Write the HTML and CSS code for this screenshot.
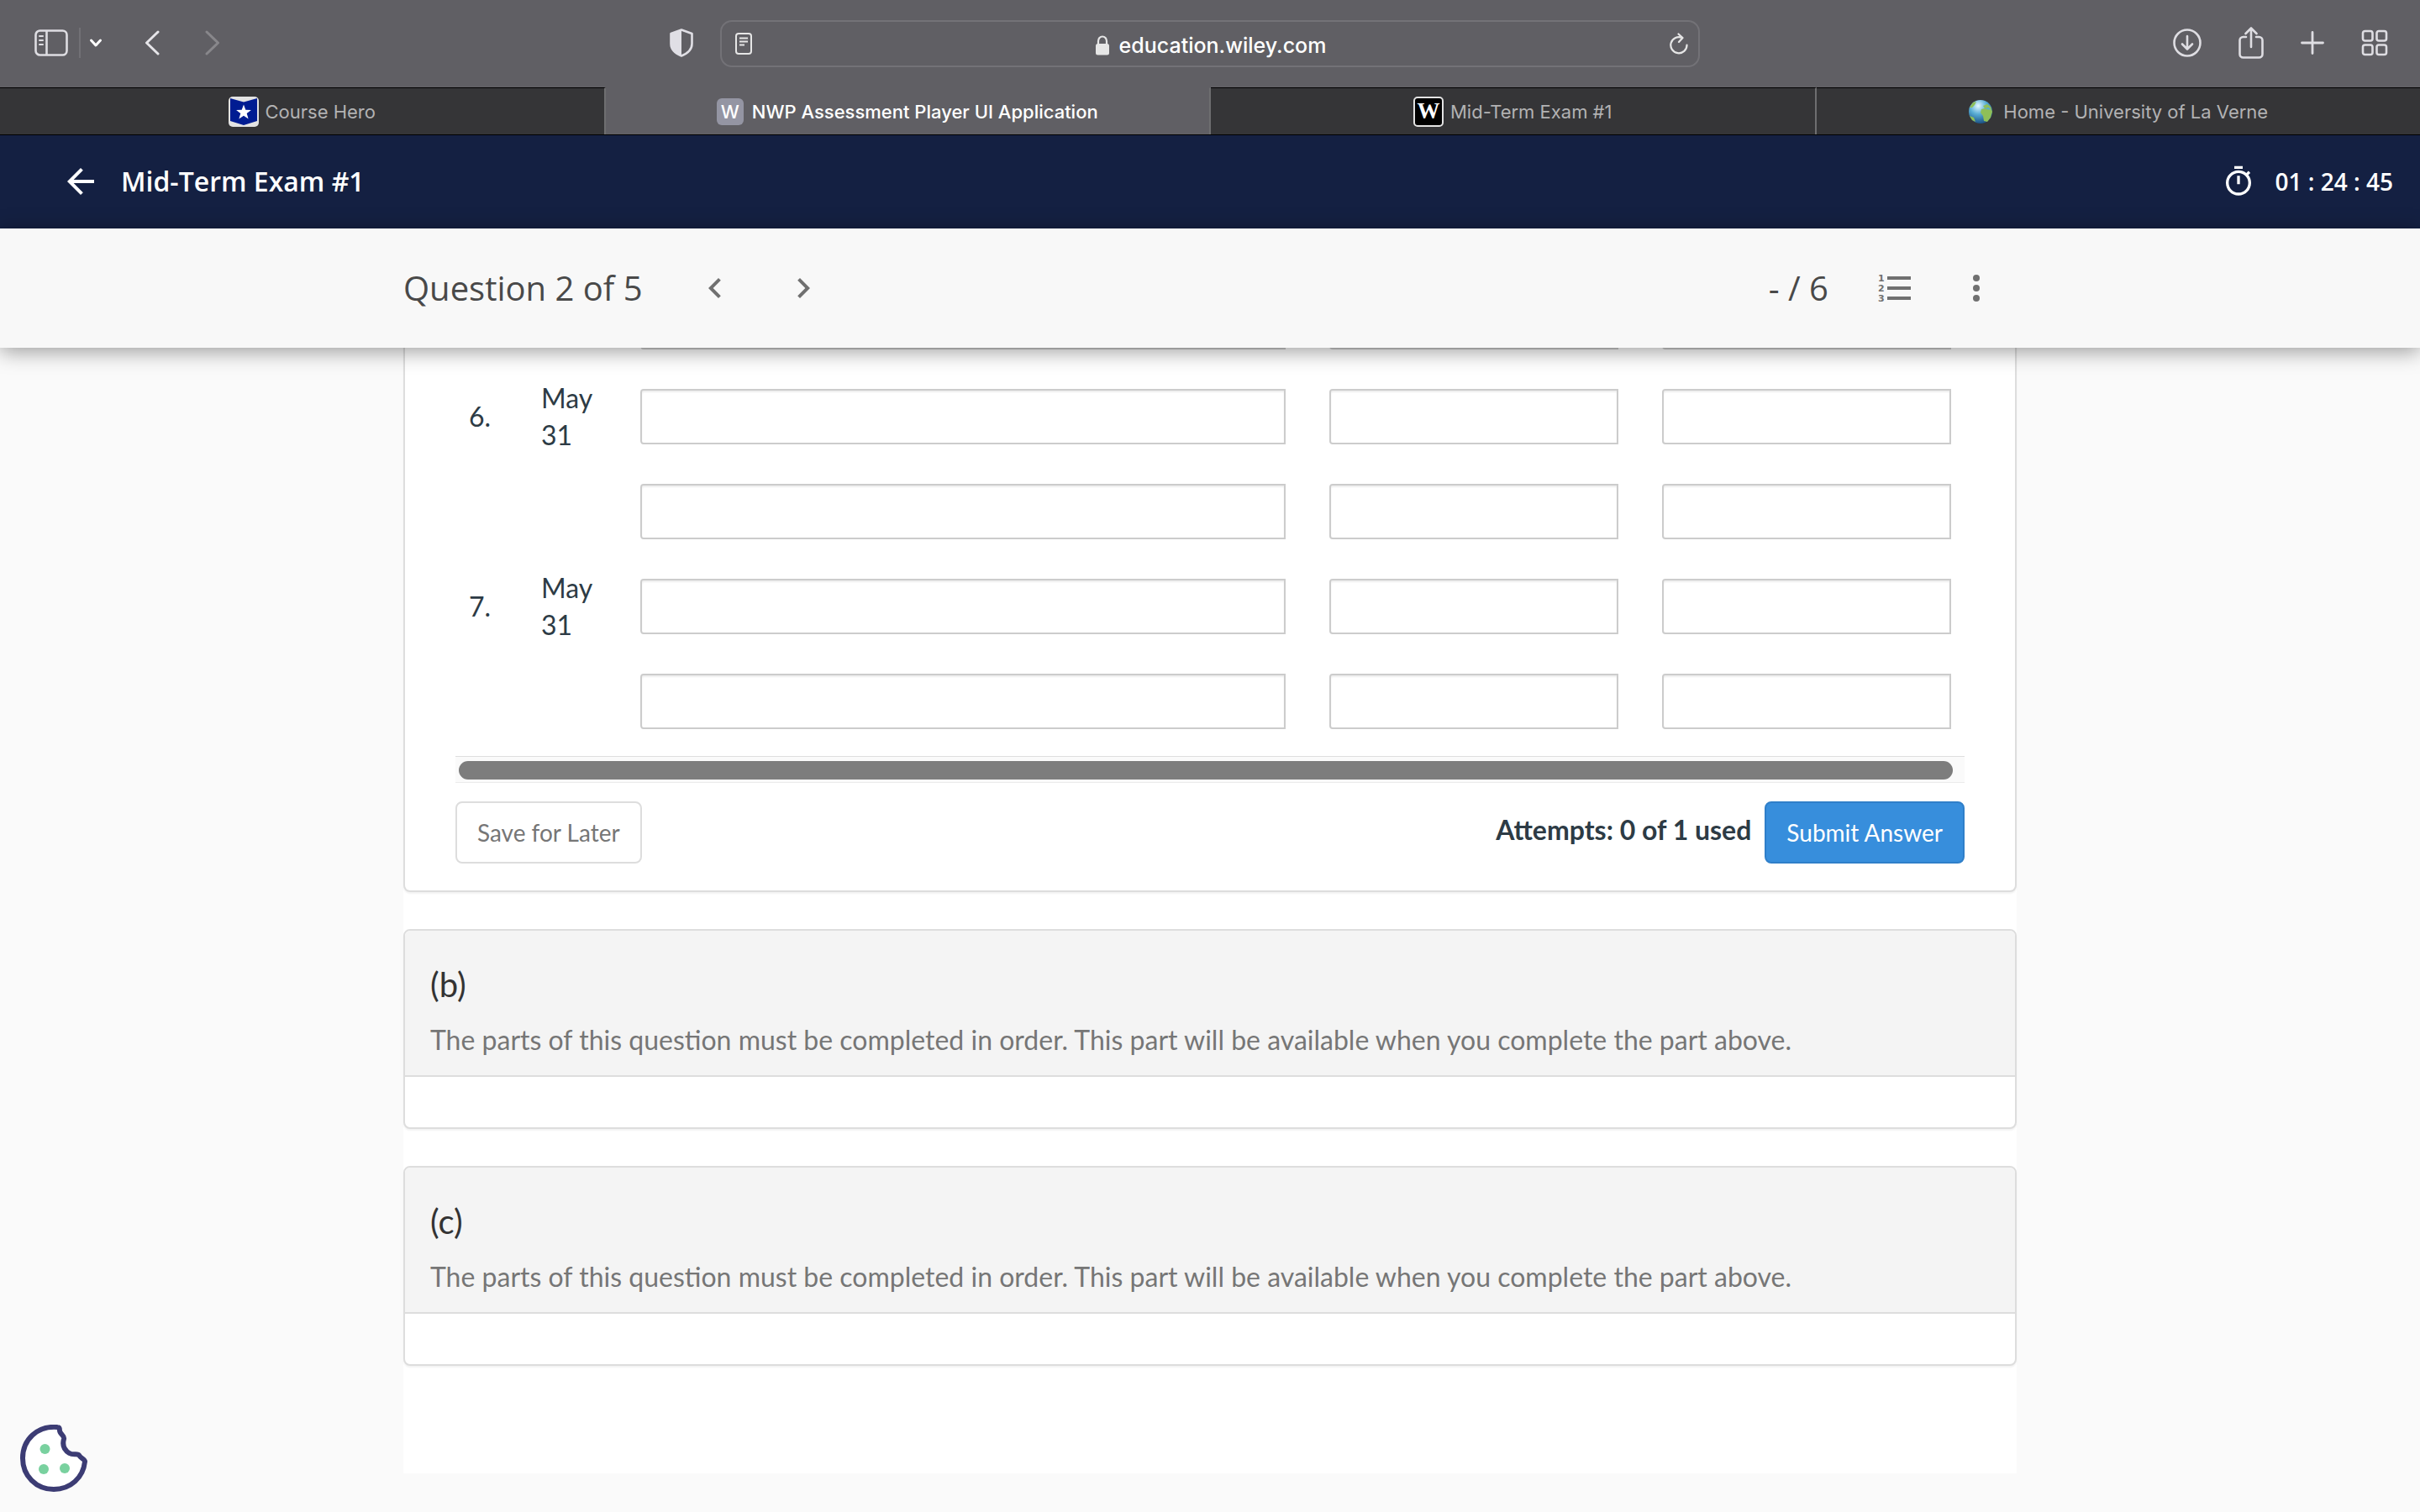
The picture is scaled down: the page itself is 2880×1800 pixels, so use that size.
FILE: index.html
```html
<!DOCTYPE html>
<html lang="en">
<head>
  <meta charset="UTF-8" />
  <meta name="viewport" content="width=device-width, initial-scale=1.0"/>
  <title>NWP Assessment Player UI Application</title>
  <link rel="stylesheet" href="styles.css">
</head>
<body>
  <!-- Browser toolbar -->
  <div class="toolbar">
    <div class="toolbar-left">
      <button class="tool" aria-label="Show sidebar">
        <svg width="40" height="32" viewBox="0 0 40 32" fill="none" stroke="#dedde2" stroke-width="2.6"><rect x="1.5" y="1.5" width="37" height="29" rx="5"/><path d="M14.5 2v28"/><path d="M6 8h4M6 13h4M6 18h4" stroke-width="2" stroke-linecap="round"/></svg>
      </button>
      <span class="divider"></span>
      <button class="tool tool-menu" aria-label="Tab groups">
        <svg width="16" height="12" viewBox="0 0 16 12" fill="none" stroke="#fff" stroke-width="3" stroke-linecap="round" stroke-linejoin="round"><path d="M2.5 3L8 9l5.500-6"/></svg>
      </button>
      <button class="tool tool-back" aria-label="Back">
        <svg width="18" height="30" viewBox="0 0 18 30" fill="none" stroke="#e6e5e9" stroke-width="3" stroke-linecap="round" stroke-linejoin="round"><path d="M16 2L2.500 15 16 28"/></svg>
      </button>
      <button class="tool tool-forward" aria-label="Forward">
        <svg width="18" height="30" viewBox="0 0 18 30" fill="none" stroke="#88878b" stroke-width="3" stroke-linecap="round" stroke-linejoin="round"><path d="M2 2l13.500 13L2 28"/></svg>
      </button>
      <button class="tool tool-shield" aria-label="Privacy report">
        <svg width="28" height="34" viewBox="0 0 28 34"><path d="M14 1.500L26.500 6v12c0 7-5 11.500-12.500 14.500C6.500 29.500 1.500 25 1.500 18V6z" fill="none" stroke="#e0dfe5" stroke-width="2.600" stroke-linejoin="round"/><path d="M14 1L1 6v12c0 7 5 12 13 15z" fill="#e0dfe5"/></svg>
      </button>
    </div>

    <div class="address">
      <button class="tool" aria-label="Reader">
        <svg width="20" height="26" viewBox="0 0 20 26" fill="none" stroke="#e6e6e6" stroke-width="2"><rect x="1" y="1" width="18" height="24" rx="3"/><path d="M5 6.500h10M5 10.500h10M5 14.500h6"/></svg>
      </button>
      <span class="url">
        <svg width="16" height="24" viewBox="0 0 16 24"><path d="M3 12V7a5 5.500 0 0 1 10 0v5" fill="none" stroke="#e6e6e6" stroke-width="2.200"/><rect x="0" y="10" width="16" height="13.500" rx="2.500" fill="#e6e6e6"/></svg>
        education.wiley.com
      </span>
      <button class="tool" aria-label="Reload">
        <svg width="22" height="26" viewBox="0 0 22 26" fill="none" stroke="#e6e6e6" stroke-width="2.200" stroke-linecap="round" stroke-linejoin="round"><path d="M20.500 14.500A9.600 9.600 0 1 1 15 6"/><path d="M10.500 1.500L15.500 6l-4.500 5"/></svg>
      </button>
    </div>

    <div class="toolbar-right">
      <button class="tool" aria-label="Downloads">
        <svg width="34" height="34" viewBox="0 0 34 34" fill="none" stroke="#dedde2" stroke-width="2.600" stroke-linecap="round" stroke-linejoin="round"><circle cx="17" cy="17" r="15.500"/><path d="M17 9v15M11 18.500l6 6 6-6"/></svg>
      </button>
      <button class="tool" aria-label="Share">
        <svg width="30" height="38" viewBox="0 0 30 38" fill="none" stroke="#dedde2" stroke-width="2.600" stroke-linecap="round" stroke-linejoin="round"><path d="M9 12H5.500a4 4 0 0 0-4 4v16.500a4 4 0 0 0 4 4h19a4 4 0 0 0 4-4V16a4 4 0 0 0-4-4H21M15 2v22M8.500 8L15 1.500 21.500 8"/></svg>
      </button>
      <button class="tool" aria-label="New tab">
        <svg width="28" height="28" viewBox="0 0 28 28" fill="none" stroke="#dedde2" stroke-width="2.800" stroke-linecap="round"><path d="M14 1.500v25M1.500 14h25"/></svg>
      </button>
      <button class="tool" aria-label="Tab overview">
        <svg width="32" height="32" viewBox="0 0 32 32" fill="none" stroke="#dedde2" stroke-width="2.600"><rect x="2" y="2" width="11.500" height="11.500" rx="2.500"/><rect x="18.500" y="2" width="11.500" height="11.500" rx="2.500"/><rect x="2" y="18.500" width="11.500" height="11.500" rx="2.500"/><rect x="18.500" y="18.500" width="11.500" height="11.500" rx="2.500"/></svg>
      </button>
    </div>
  </div>

  <!-- Browser tabs -->
  <nav class="tabs">
    <a class="tab" href="#">
      <svg width="36" height="36" viewBox="0 0 36 36"><rect width="36" height="36" rx="5" fill="#e3e3e3"/><path d="M2 2l16 4.500L34 2v27l-16 5L2 29z" fill="#001c92"/><path d="M18 9.500l2.300 6.200 6.600.2-5.200 4.100 1.900 6.400-5.600-3.700-5.600 3.700 1.900-6.400-5.200-4.100 6.600-.2z" fill="#fff"/></svg>
      Course Hero
    </a>
    <a class="tab active" href="#">
      <span class="favicon favicon-gray">W</span>
      NWP Assessment Player UI Application
    </a>
    <a class="tab" href="#">
      <span class="favicon favicon-black">W</span>
      Mid-Term Exam #1
    </a>
    <a class="tab tab-globe" href="#">
      <svg width="30" height="30" viewBox="0 0 30 30"><defs><radialGradient id="sea" cx=".4" cy=".25" r=".8"><stop offset="0" stop-color="#e4f8ff"/><stop offset=".45" stop-color="#58acd4"/><stop offset="1" stop-color="#14487c"/></radialGradient></defs><circle cx="15" cy="15" r="14" fill="url(#sea)"/><path d="M18 8l5-2 4 3 2 6-2 7-4 5-4-1-1-6-3-4 1-4 4-1zM2 10l4-6 4-1-2 4-3 3zM2 20l5 2 2 5-4-2z" fill="#8fbf58"/><path d="M19 11l6-1 2 3-4-1z" fill="#58acd4"/></svg>
      Home - University of La Verne
    </a>
  </nav>

  <header class="exam-header">
    <a class="exam-title" href="#">
      <svg width="48" height="48" viewBox="0 0 24 24" fill="#fff"><path d="M20 11H7.830l5.590-5.590L12 4l-8 8 8 8 1.410-1.410L7.830 13H20v-2z"/></svg>
      Mid-Term Exam #1
    </a>
    <div class="timer">
      <svg width="40" height="40" viewBox="0 0 24 24" fill="#fff"><path d="M15 1H9v2h6V1zm-4 13h2V8h-2v6zm8.030-6.610l1.420-1.420c-.43-.51-.9-.99-1.410-1.410l-1.420 1.420A8.962 8.962 0 0 0 12 4c-4.970 0-9 4.030-9 9s4.020 9 9 9 9-4.030 9-9c0-2.120-.74-4.070-1.970-5.610zM12 20c-3.870 0-7-3.130-7-7s3.130-7 7-7 7 3.130 7 7-3.130 7-7 7z"/></svg>
      <span>01 : 24 : 45</span>
    </div>
  </header>

  <div class="question-bar">
    <div class="question-inner">
      <h1>Question 2 of 5</h1>
      <div class="pager">
        <button class="tool" aria-label="Previous question">
          <svg width="48" height="48" viewBox="0 0 24 24" fill="#707070"><path d="M15.410 7.410L14 6l-6 6 6 6 1.410-1.410L10.830 12z"/></svg>
        </button>
        <button class="tool" aria-label="Next question">
          <svg width="48" height="48" viewBox="0 0 24 24" fill="#707070"><path d="M10 6L8.590 7.410 13.170 12l-4.580 4.590L10 18l6-6z"/></svg>
        </button>
      </div>
      <span class="score">- / 6</span>
      <button class="tool" aria-label="Question list">
        <svg class="list-icon" width="48" height="48" viewBox="0 0 48 48" fill="#707070"><path d="M14 10h28v4H14zM14 22h28v4H14zM14 34h28v4H14z"/><text x="3" y="16">1</text><text x="3" y="28">2</text><text x="3" y="40">3</text></svg>
      </button>
      <button class="tool tool-more" aria-label="More options">
        <svg width="48" height="48" viewBox="0 0 24 24" fill="#707070"><circle cx="12" cy="6" r="2"/><circle cx="12" cy="12" r="2"/><circle cx="12" cy="18" r="2"/></svg>
      </button>
    </div>
  </div>

  <main class="content">
    <section class="card journal">
      <div class="table-scroll">
        <table>
          <colgroup>
            <col class="col-number">
            <col class="col-date">
            <col>
            <col class="col-amount">
            <col class="col-amount">
          </colgroup>
          <tr>
            <td></td>
            <td></td>
            <td class="entry"><input type="text" aria-label="Account title, line 1"></td>
            <td class="entry"><input type="text" aria-label="Debit, line 1"></td>
            <td class="entry"><input type="text" aria-label="Credit, line 1"></td>
          </tr>
          <tr>
            <td>6.</td>
            <td>May 31</td>
            <td class="entry"><input type="text" aria-label="Account title, line 2"></td>
            <td class="entry"><input type="text" aria-label="Debit, line 2"></td>
            <td class="entry"><input type="text" aria-label="Credit, line 2"></td>
          </tr>
          <tr>
            <td></td>
            <td></td>
            <td class="entry"><input type="text" aria-label="Account title, line 3"></td>
            <td class="entry"><input type="text" aria-label="Debit, line 3"></td>
            <td class="entry"><input type="text" aria-label="Credit, line 3"></td>
          </tr>
          <tr>
            <td>7.</td>
            <td>May 31</td>
            <td class="entry"><input type="text" aria-label="Account title, line 4"></td>
            <td class="entry"><input type="text" aria-label="Debit, line 4"></td>
            <td class="entry"><input type="text" aria-label="Credit, line 4"></td>
          </tr>
          <tr>
            <td></td>
            <td></td>
            <td class="entry"><input type="text" aria-label="Account title, line 5"></td>
            <td class="entry"><input type="text" aria-label="Debit, line 5"></td>
            <td class="entry"><input type="text" aria-label="Credit, line 5"></td>
          </tr>
        </table>
      </div>
      <div class="scroll-track"><div class="scroll-thumb"></div></div>
      <div class="actions">
        <button class="btn">Save for Later</button>
        <span class="attempts">Attempts: 0 of 1 used</span>
        <button class="btn btn-primary">Submit Answer</button>
      </div>
    </section>

    <section class="card">
      <div class="card-head">
        <h2>(b)</h2>
        <p>The parts of this question must be completed in order. This part will be available when you complete the part above.</p>
      </div>
      <div class="card-body"></div>
    </section>

    <section class="card">
      <div class="card-head">
        <h2>(c)</h2>
        <p>The parts of this question must be completed in order. This part will be available when you complete the part above.</p>
      </div>
      <div class="card-body"></div>
    </section>
  </main>

  <button class="tool cookie" aria-label="Cookie preferences">
    <svg width="80" height="80" viewBox="0 0 80 80"><path d="M44.500 3C20 1 3 18 3 40c0 21 16 37 37 37 20 0 35-14 37-33 .3-3-5-4-6.500-7-2-3.500-7 0-12-3C52 30 50 24 52 17c1-4-5-6-5-10 0-2-.5-4-2.500-4z" fill="#fff" stroke="#3c3c74" stroke-width="6" stroke-linejoin="round"/><g fill="#79d19f"><circle cx="29.500" cy="29" r="6"/><circle cx="28" cy="53" r="6"/><circle cx="53" cy="52" r="6"/></g></svg>
  </button>
</body>
</html>
```

FILE: styles.css
```css
* {
  box-sizing: border-box;
}
body {
  margin: 0;
  min-height: 100vh;
  background: #fafafa;
  font-family: Lato, sans-serif;
  color: #2d3b45;
}
svg {
  display: block;
  flex: none;
}
h1, h2, p {
  margin: 0;
}
.tool {
  display: block;
  padding: 0;
  border: none;
  background: none;
  cursor: pointer;
}

/* browser chrome */
.toolbar {
  display: grid;
  grid-template-columns: 1fr 40.5% 1fr;
  align-items: center;
  height: 104px;
  background: #605f64;
  font-family: Inter, sans-serif;
}
.toolbar-left,
.toolbar-right {
  display: flex;
  align-items: center;
  padding-bottom: 2px;
}
.toolbar-left {
  padding-left: 41px;
  padding-right: 32px;
}
.divider {
  width: 2px;
  height: 36px;
  margin: 0 10px 0 13px;
  background: #727176;
}
.tool-back {
  margin-left: 50px;
}
.tool-forward {
  margin-left: 54px;
}
.tool-shield {
  margin-left: auto;
}
.toolbar-right {
  justify-content: flex-end;
  gap: 44px;
  padding-right: 38px;
}
.address {
  display: flex;
  align-items: center;
  justify-content: space-between;
  height: 56px;
  padding: 0 12px 0 16px;
  border: 2px solid #737277;
  border-radius: 14px;
}
.url {
  display: flex;
  align-items: center;
  gap: 12px;
  padding-top: 3px;
  font-size: 25px;
  font-weight: 500;
  color: #fff;
}
.tabs {
  display: flex;
  height: 57px;
  border-bottom: 1px solid #000;
  background: #353537;
  font-family: Inter, sans-serif;
}
.tab {
  display: flex;
  flex: 1;
  align-items: center;
  justify-content: center;
  gap: 8px;
  border-top: 1px solid #000;
  border-right: 2px solid #6e6e70;
  font-size: 22px;
  color: #b2b2b3;
  text-decoration: none;
}
.tab:last-child {
  border-right: none;
}
.tab.active {
  gap: 10px;
  border-top-color: #605f64;
  background: #605f64;
  font-weight: 500;
  color: #fff;
}
.tab-globe {
  gap: 12px;
}
.favicon {
  display: flex;
  align-items: center;
  justify-content: center;
  width: 32px;
  height: 32px;
  border-radius: 6px;
  color: #fff;
}
.favicon-gray {
  background: #9495a3;
}
.favicon-black {
  width: 36px;
  height: 36px;
  border: 2px solid #e3e3e3;
  border-radius: 5px;
  background: #000;
  font-family: "Liberation Serif", serif;
  font-size: 27px;
  font-weight: bold;
}

/* exam header */
.exam-header {
  display: flex;
  align-items: center;
  justify-content: space-between;
  height: 111px;
  padding: 0 32px 2px 72px;
  background: #142042;
  font-family: "Open Sans", sans-serif;
  font-weight: 600;
  color: #fff;
}
.exam-title {
  display: flex;
  align-items: center;
  gap: 24px;
  font-size: 32px;
  color: #fff;
  text-decoration: none;
}
.timer {
  display: flex;
  align-items: center;
  gap: 24px;
  font-size: 28px;
}
.question-bar {
  position: relative;
  z-index: 1;
  background: #f8f8f8;
  box-shadow: 0 4px 24px rgba(0,0,0,0.4);
}
.question-inner {
  display: flex;
  align-items: center;
  width: 66.667%;
  height: 142px;
  margin: 0 auto;
  padding-right: 24px;
  font-family: "Open Sans", sans-serif;
  font-size: 40px;
  color: #494949;
}
.question-inner h1 {
  padding-bottom: 2px;
  font-size: 40px;
  font-weight: 400;
}
.pager {
  display: flex;
  gap: 57px;
  margin: 0 auto 0 62px;
}
.score {
  margin-right: 56px;
  padding-bottom: 2px;
}
.tool-more {
  margin-left: 48px;
}
.list-icon text {
  font: bold 11px "DejaVu Sans", sans-serif;
}

/* question parts, first one is scrolled under the bar */
.content {
  width: 66.667%;
  margin: -88px auto 0;
  padding-bottom: 128px;
  background: #fff;
}
.card {
  border: 2px solid #ddd;
  border-radius: 8px;
  background: #fff;
  box-shadow: 0 2px 2px rgba(0,0,0,0.05);
}
.card + .card {
  margin-top: 44px;
}
.journal {
  padding: 0 60px 32px;
  border-top: none;
}
.table-scroll {
  overflow: hidden;
}
table {
  width: calc(100% + 10px);
  table-layout: fixed;
  border-collapse: collapse;
  font-size: 32px;
  line-height: 44px;
}
.col-number {
  width: 86px;
}
.col-date {
  width: 108px;
}
.col-amount {
  width: 396px;
}
td {
  height: 113px;
  padding: 0 16px;
}
.entry {
  padding: 0 26px;
}
.entry input {
  display: block;
  width: 100%;
  height: 66px;
  padding: 8px 12px;
  border: 2px solid #ccc;
  border-radius: 4px 0 0 4px;
  background: #fff;
  box-shadow: inset 0 2px 2px rgba(0,0,0,0.07);
  font: inherit;
}
.scroll-track {
  margin-top: 9px;
  padding: 5px 14px 3px 4px;
  border-top: 1px solid #dedede;
  border-bottom: 1px solid #ebebeb;
  background: #fafafa;
}
.scroll-thumb {
  height: 22px;
  border-radius: 11px;
  background: #7d7d7d;
}
.actions {
  display: flex;
  align-items: center;
  margin-top: 22px;
}
.btn {
  height: 74px;
  padding: 0 24px;
  border: 2px solid #ddd;
  border-radius: 8px;
  background: #fff;
  font-family: inherit;
  font-size: 28px;
  color: #767676;
  cursor: pointer;
}
.btn-primary {
  border-color: #2f7fc9;
  background: #378edc;
  color: #fff;
}
.attempts {
  margin: 0 16px 0 auto;
  padding-bottom: 8px;
  font-size: 32px;
  font-weight: bold;
}
.card-head {
  padding: 36px 30px 18px;
  border-bottom: 2px solid #ddd;
  border-radius: 6px 6px 0 0;
  background: #f4f4f4;
}
.card-head h2 {
  font-size: 40px;
  font-weight: 400;
  line-height: 56px;
  color: #333;
}
.card-head p {
  margin-top: 14px;
  font-size: 32px;
  line-height: 48px;
  color: #767676;
}
.card-body {
  height: 60px;
}
.cookie {
  position: fixed;
  left: 24px;
  bottom: 24px;
}
```
